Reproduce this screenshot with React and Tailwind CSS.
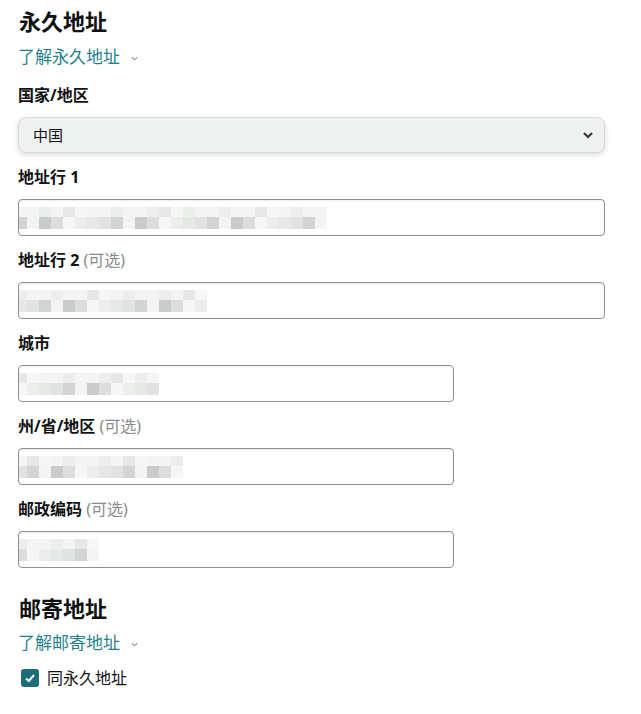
import React from "react";

const FONT = { fontFamily: '"Noto Sans", "Noto Sans CJK SC", sans-serif' };

// pixelated redacted value inside an input
const Mosaic = ({ cols, seed }) => {
  const shades = ["#f3f4f3", "#e6e8e6", "#dcdedc", "#d2d5d3", "#eceeec", "#c9cccb", "#e1e3e2", "#f6f6f6"];
  const top = [];
  const bottom = [];
  for (let i = 0; i < cols; i++) {
    top.push(shades[(i * 3 + seed) % 8 === 5 ? 1 : ((i * 3 + seed) % 8) % 5 === 0 ? 7 : (i + seed) % 3 === 0 ? 4 : 0]);
    bottom.push(shades[(i * 5 + seed * 3) % 8]);
  }
  return (
    <div className="flex flex-col -ml-[4px]">
      <div className="flex">
        {top.map((c, i) => (
          <div key={i} className="w-[12px] h-[10px]" style={{ backgroundColor: c }} />
        ))}
      </div>
      <div className="flex">
        {bottom.map((c, i) => (
          <div key={i} className="w-[12px] h-[12px]" style={{ backgroundColor: c }} />
        ))}
      </div>
    </div>
  );
};

const Label = ({ text, optional }) => (
  <div className="text-[16px] leading-[20px] font-bold text-[#111] mb-[12px]">
    {text}
    {optional && <span className="font-normal text-[#8a8a8a]"> (可选)</span>}
  </div>
);

const Input = ({ cols, seed, narrow }) => (
  <div
    className={`h-[37px] flex items-center border border-[#8d9096] rounded-[4px] bg-white shadow-[inset_0_1px_2px_rgba(0,0,0,0.08)] overflow-hidden ${
      narrow ? "w-[436px]" : "w-[587px]"
    }`}
  >
    <Mosaic cols={cols} seed={seed} />
  </div>
);

const Chevron = () => (
  <svg width="9" height="9" viewBox="0 0 10 10" className="ml-[10px] mt-[2px]">
    <path d="M2 3.5 L5 6.5 L8 3.5" fill="none" stroke="#8a8f94" strokeWidth="1.2" />
  </svg>
);

export default function App() {
  return (
    <div className="bg-white min-h-[714px] px-[18px] pt-[6px]" style={FONT}>
      <h2 className="text-[22px] leading-[30px] font-bold text-[#0f1111] ml-[1px]">永久地址</h2>
      <div className="flex items-center mt-[10px] text-[17px] leading-[22px] text-[#1f7f8c]">
        了解永久地址
        <Chevron />
      </div>

      <div className="mt-[17px]">
        <Label text="国家/地区" />
        <div className="w-[587px] h-[36px] flex items-center justify-between pl-[14px] pr-[10px] rounded-[8px] bg-[#f0f2f2] border border-[#d5d9d9] shadow-[0_2px_5px_rgba(15,17,17,0.15)] text-[15px] text-[#0f1111]">
          <span>中国</span>
          <svg width="12" height="12" viewBox="0 0 12 12">
            <path d="M2 4 L6 8 L10 4" fill="none" stroke="#333" strokeWidth="2" />
          </svg>
        </div>
      </div>

      <div className="mt-[14px]">
        <Label text="地址行 1" />
        <Input cols={26} seed={1} />
      </div>

      <div className="mt-[14px]">
        <Label text="地址行 2" optional />
        <Input cols={16} seed={3} />
      </div>

      <div className="mt-[14px]">
        <Label text="城市" />
        <Input cols={12} seed={5} narrow />
      </div>

      <div className="mt-[14px]">
        <Label text="州/省/地区" optional />
        <Input cols={14} seed={2} narrow />
      </div>

      <div className="mt-[14px]">
        <Label text="邮政编码" optional />
        <Input cols={7} seed={6} narrow />
      </div>

      <h2 className="mt-[25px] text-[22px] leading-[30px] font-bold text-[#0f1111] ml-[1px]">邮寄地址</h2>
      <div className="flex items-center mt-[9px] text-[17px] leading-[22px] text-[#1f7f8c]">
        了解邮寄地址
        <Chevron />
      </div>
      <label className="flex items-center mt-[14px] ml-[3px] gap-[8px] text-[16px] leading-[20px] text-[#0f1111]">
        <span className="w-[18px] h-[18px] rounded-[3px] bg-[#1c6d7a] flex items-center justify-center">
          <svg width="12" height="12" viewBox="0 0 12 12">
            <path d="M2 6.5 L4.8 9 L10 3" fill="none" stroke="white" strokeWidth="2" />
          </svg>
        </span>
        同永久地址
      </label>
    </div>
  );
}
